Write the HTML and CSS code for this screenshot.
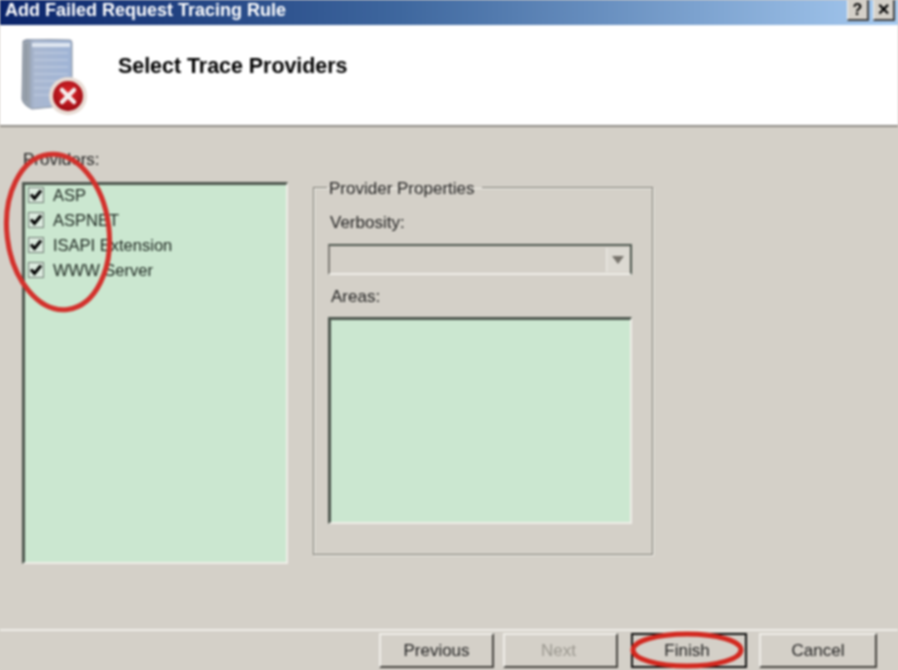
FILE: index.html
```html
<!DOCTYPE html>
<html lang="en">
<head>
    <meta charset="UTF-8">
    <title>Add Failed Request Tracing Rule</title>
    <link rel="stylesheet" href="styles.css">
</head>
<body>
    <div class="dialog">
        <div class="titlebar">
            <span class="title-text">Add Failed Request Tracing Rule</span>
            <div class="title-btns">
                <span class="title-btn">?</span>
                <span class="title-btn">✕</span>
            </div>
        </div>

        <div class="header">
            <svg class="header-icon" width="68" height="78" viewBox="0 0 68 78">
                <defs>
                    <linearGradient id="cover" x1="0" x2="1" y1="0" y2="0">
                        <stop offset="0" stop-color="#7f8a9c"/>
                        <stop offset="0.25" stop-color="#aab8d0"/>
                        <stop offset="1" stop-color="#9fb4d6"/>
                    </linearGradient>
                    <radialGradient id="badge" cx="0.5" cy="0.4" r="0.6">
                        <stop offset="0" stop-color="#e0282c"/>
                        <stop offset="1" stop-color="#9c0c14"/>
                    </radialGradient>
                </defs>
                <path d="M3 2 L8 0 L50 1 Q52 1 52 4 L52 66 L12 70 Q3 66 2 60 Z" fill="url(#cover)" stroke="#8a93a0" stroke-width="1"/>
                <path d="M3 3 L10 2 L10 69 L3 62 Z" fill="#9aa3ae"/>
                <path d="M12 4 H50 V8 H12 Z" fill="#dfe6f0"/>
                <g stroke="#c4d0e4" stroke-width="1">
                    <path d="M14 14 H48 M14 21 H48 M14 28 H48 M14 35 H48 M14 42 H48 M14 49 H42 M14 56 H36"/>
                </g>
                <g stroke="#5d6675" stroke-width="1" stroke-dasharray="1 2">
                    <path d="M6 6 V62"/>
                </g>
                <circle cx="48" cy="57" r="19" fill="#e8dcd4"/>
                <circle cx="48" cy="57" r="15" fill="url(#badge)"/>
                <path d="M42 51 L54 63 M54 51 L42 63" stroke="#f4eeee" stroke-width="4.5" stroke-linecap="round"/>
            </svg>
            <h1 class="header-title">Select Trace Providers</h1>
        </div>

        <div class="content">
            <div class="providers">
                <div class="label providers-label">Providers:</div>
                <div class="green-box provider-list">
                    <div class="provider-row"><span class="check"><svg width="14" height="14" viewBox="0 0 14 14"><path d="M2 6.5 L5.5 10.5 L12 2.5" fill="none" stroke="#000" stroke-width="3"/></svg></span>ASP</div>
                    <div class="provider-row"><span class="check"><svg width="14" height="14" viewBox="0 0 14 14"><path d="M2 6.5 L5.5 10.5 L12 2.5" fill="none" stroke="#000" stroke-width="3"/></svg></span>ASPNET</div>
                    <div class="provider-row"><span class="check"><svg width="14" height="14" viewBox="0 0 14 14"><path d="M2 6.5 L5.5 10.5 L12 2.5" fill="none" stroke="#000" stroke-width="3"/></svg></span>ISAPI Extension</div>
                    <div class="provider-row"><span class="check"><svg width="14" height="14" viewBox="0 0 14 14"><path d="M2 6.5 L5.5 10.5 L12 2.5" fill="none" stroke="#000" stroke-width="3"/></svg></span>WWW Server</div>
                </div>
            </div>

            <fieldset class="properties">
                <legend class="label properties-legend">Provider Properties</legend>
                <div class="label verbosity-label">Verbosity:</div>
                <div class="combo">
                    <span class="combo-btn"><svg width="12" height="8" viewBox="0 0 12 8"><path d="M0 0 H12 L6 8 Z" fill="#77736c"/></svg></span>
                </div>
                <div class="label areas-label">Areas:</div>
                <div class="green-box areas-list"></div>
            </fieldset>
        </div>

        <div class="footer">
            <button class="btn">Previous</button>
            <button class="btn btn-disabled">Next</button>
            <button class="btn btn-default">Finish</button>
            <button class="btn btn-cancel">Cancel</button>
        </div>

        <!-- red marker circles drawn over the screenshot -->
        <svg class="marks" width="898" height="670" viewBox="0 0 898 670">
            <ellipse cx="58" cy="232" rx="51" ry="78" fill="none" stroke="#d3312c" stroke-width="5" transform="rotate(-7 58 232)"/>
            <ellipse cx="687" cy="650" rx="54" ry="16" fill="none" stroke="#d3281f" stroke-width="5"/>
        </svg>
    </div>
</body>
</html>
```

FILE: styles.css
```css
html, body {
    margin: 0;
    padding: 0;
}
body {
    width: 898px;
    height: 670px;
    overflow: hidden;
    font-family: "Liberation Sans", Arial, sans-serif;
    background: #d4d0c8;
}
.dialog {
    position: relative;
    width: 898px;
    height: 670px;
    display: flex;
    flex-direction: column;
    overflow: hidden;
    background: #d4d0c8;
    filter: blur(0.8px);
}

/* title bar */
.titlebar {
    height: 25px;
    flex: none;
    display: flex;
    align-items: center;
    justify-content: space-between;
    padding: 0 3px 0 5px;
    box-sizing: border-box;
    background: linear-gradient(to right, #0a246a, #3f689f 45%, #a6caf0);
}
.title-text {
    color: #fff;
    font-size: 18px;
    font-weight: bold;
    margin-top: -4px;
}
.title-btns {
    display: flex;
    gap: 4px;
    align-self: flex-start;
}
.title-btn {
    width: 22px;
    height: 21px;
    background: #d4d0c8;
    border-right: 2px solid #404040;
    border-bottom: 2px solid #404040;
    border-left: 1px solid #f4f4f0;
    box-sizing: border-box;
    color: #000;
    font-size: 16px;
    font-weight: bold;
    text-align: center;
    line-height: 19px;
}

/* white header */
.header {
    height: 102px;
    flex: none;
    box-sizing: border-box;
    display: flex;
    align-items: flex-start;
    background: #fff;
    border-bottom: 2px solid #8f8c86;
}
.header-icon {
    margin: 14px 0 0 20px;
}
.header-title {
    margin: 28px 0 0 30px;
    font-size: 21.4px;
    line-height: 26px;
    font-weight: bold;
    color: #000;
}

/* main area */
.content {
    flex: 1;
    display: flex;
    align-items: flex-start;
    padding: 25px 0 0 22px;
}
.label {
    font-size: 17px;
    color: #1f1f1f;
}
.providers {
    width: 266px;
}
.providers-label {
    height: 16px;
    margin: 0 0 14px 1px;
    line-height: 16px;
}
.green-box {
    box-sizing: border-box;
    background: #cbe7d0;
    border-top: 3px solid #4d564e;
    border-left: 3px solid #4d564e;
    border-right: 2px solid #efeee8;
    border-bottom: 2px solid #efeee8;
}
.provider-list {
    height: 382px;
    display: flex;
    flex-direction: column;
    gap: 5px;
}
.provider-row {
    height: 20px;
    display: flex;
    align-items: center;
    font-size: 16.5px;
    color: #1c261f;
}
.check {
    width: 16px;
    height: 16px;
    box-sizing: border-box;
    margin: 0 9px 0 3px;
    border: 1px solid #6f7972;
    background: #dcebdf;
}
.check svg {
    display: block;
}

/* group box on the right */
.properties {
    width: 340px;
    height: 377px;
    box-sizing: border-box;
    margin: 26px 0 0 25px;
    padding: 0 20px 0 14px;
    border: 1px solid #7a7871;
    box-shadow: 1px 1px 0 #f2f0ea, inset 1px 1px 0 #f2f0ea;
}
.properties-legend {
    padding: 3px 7px 0 2px;
    margin-left: -1px;
    line-height: 16px;
}
.verbosity-label {
    margin-top: 18px;
    padding-left: 2px;
    line-height: 16px;
}
.combo {
    height: 31px;
    margin-top: 13px;
    box-sizing: border-box;
    display: flex;
    justify-content: flex-end;
    align-items: center;
    padding-right: 1px;
    background: #d4d0c8;
    border-top: 2px solid #4d564e;
    border-left: 2px solid #7c7a74;
    border-right: 2px solid #4d564e;
    border-bottom: 2px solid #efeee8;
}
.combo-btn {
    width: 22px;
    height: 24px;
    display: flex;
    align-items: center;
    justify-content: center;
    background: #dcd9d2;
    border-left: 1px solid #efeee8;
}
.areas-label {
    margin-top: 14px;
    padding-left: 3px;
    line-height: 16px;
}
.areas-list {
    height: 207px;
    margin-top: 12px;
}

/* bottom buttons */
.footer {
    height: 41px;
    flex: none;
    box-sizing: border-box;
    display: flex;
    align-items: flex-start;
    padding: 2px 0 0 379px;
    border-top: 2px solid #efeee8;
}
.btn {
    width: 115px;
    height: 35px;
    margin-right: 9px;
    padding: 1px 0 0;
    font-family: "Liberation Sans", Arial, sans-serif;
    font-size: 17px;
    color: #1f1f1f;
    background: #d4d0c8;
    border: none;
    border-top: 2px solid #efeee8;
    border-left: 2px solid #efeee8;
    border-right: 2px solid #45443f;
    border-bottom: 2px solid #45443f;
}
.btn-disabled {
    margin-right: 13px;
    padding-right: 4px;
    color: #9a978f;
}
.btn-default {
    width: 116px;
    margin-right: 12px;
    padding-right: 4px;
    border: 2px solid #111;
}
.btn-cancel {
    width: 118px;
    margin-right: 0;
}

.marks {
    position: absolute;
    top: 0;
    left: 0;
}
```
